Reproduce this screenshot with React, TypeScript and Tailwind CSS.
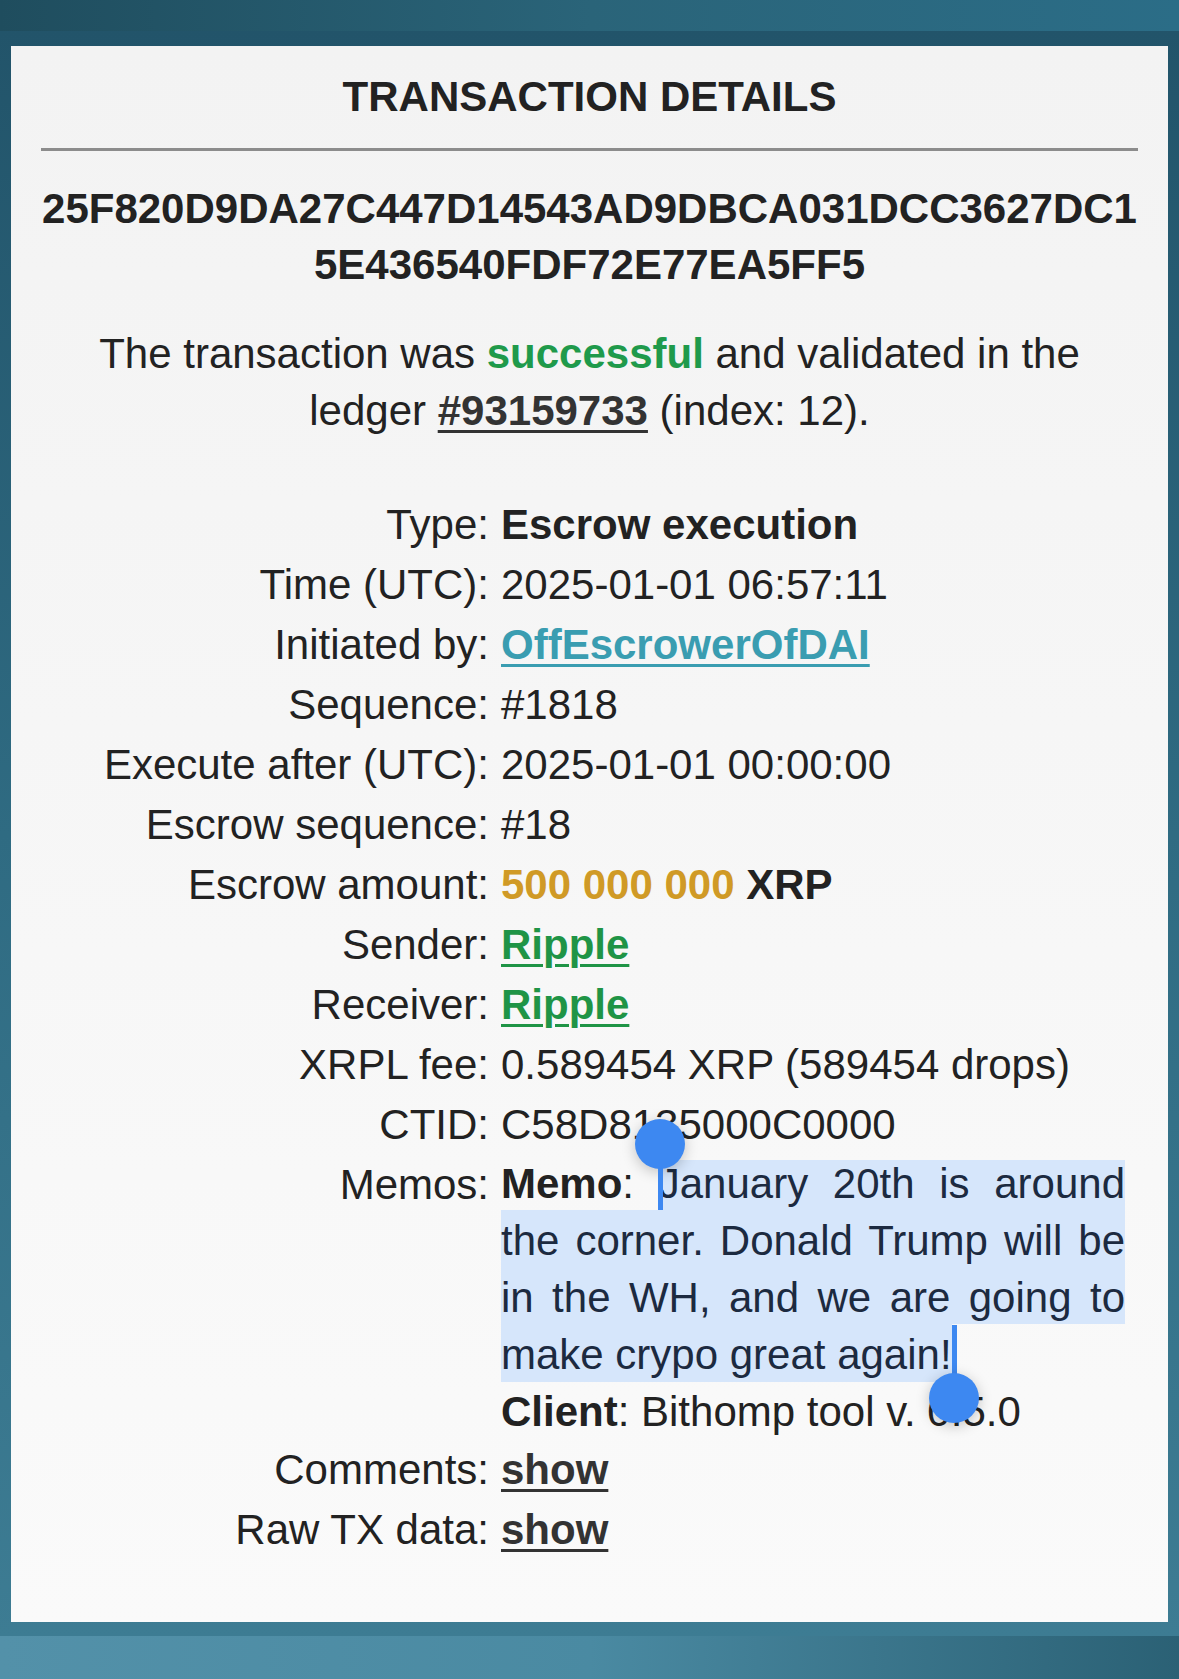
import React from 'react';

const Row: React.FC<{ label: string; children: React.ReactNode }> = ({ label, children }) => (
  <>
    <div className="text-right whitespace-nowrap">{label}</div>
    <div className="whitespace-nowrap">{children}</div>
  </>
);

const Handle: React.FC<{ className: string }> = ({ className }) => (
  <div className={`absolute w-[50px] h-[50px] rounded-full bg-[#3d88f1] shadow-[0_3px_14px_rgba(0,0,0,0.22)] z-10 ${className}`} />
);

const App: React.FC = () => {
  const sel = 'bg-[#d6e6fb] text-[#1c2a40]';

  return (
    <div className="w-[1179px] h-[1679px] flex flex-col font-['Liberation_Sans',Arial,sans-serif] text-[#222] overflow-hidden">
      <div className="h-[31px] shrink-0 bg-gradient-to-r from-[#1f4d5e] via-[#2a6479] to-[#2b6d87]" />

      <div className="flex-1 flex flex-col bg-gradient-to-b from-[#22546a] via-[#2f6b82] to-[#3d7c93] px-[11px] pt-[15px] pb-[14px]">
        <div className="flex-1 bg-gradient-to-b from-[#f3f3f3] to-[#fafafa] px-[30px] pt-[23px] text-[42px]">
          <h1 className="text-center font-bold leading-[56px]">TRANSACTION DETAILS</h1>
          <div className="mt-[23px] h-[3px] bg-[#8c8c8c]" />

          <div className="mt-[30px] text-center font-bold leading-[56px] whitespace-nowrap">
            25F820D9DA27C447D14543AD9DBCA031DCC3627DC1
            <br />
            5E436540FDF72E77EA5FF5
          </div>

          <p className="mt-[32px] text-center leading-[57px] whitespace-nowrap">
            The transaction was <span className="font-bold text-[#1f9a4b]">successful</span> and validated in the
            <br />
            ledger{' '}
            <a className="font-bold text-[#333] underline decoration-[3px] underline-offset-[5px]">#93159733</a>{' '}
            (index: 12).
          </p>

          <div className="mt-[56px] grid grid-cols-[448px_624px] gap-x-[12px] leading-[60px]">
            <Row label="Type:">
              <span className="font-bold">Escrow execution</span>
            </Row>
            <Row label="Time (UTC):">2025-01-01 06:57:11</Row>
            <Row label="Initiated by:">
              <a className="font-bold text-[#3a9db1] underline decoration-[3px] underline-offset-[5px]">OffEscrowerOfDAI</a>
            </Row>
            <Row label="Sequence:">#1818</Row>
            <Row label="Execute after (UTC):">2025-01-01 00:00:00</Row>
            <Row label="Escrow sequence:">#18</Row>
            <Row label="Escrow amount:">
              <span className="font-bold text-[#d09a26]">500 000 000</span> <span className="font-bold">XRP</span>
            </Row>
            <Row label="Sender:">
              <a className="font-bold text-[#1f9446] underline decoration-[3px] underline-offset-[5px]">Ripple</a>
            </Row>
            <Row label="Receiver:">
              <a className="font-bold text-[#1f9446] underline decoration-[3px] underline-offset-[5px]">Ripple</a>
            </Row>
            <Row label="XRPL fee:">0.589454 XRP (589454 drops)</Row>
            <Row label="CTID:">C58D8135000C0000</Row>

            <div className="text-right">Memos:</div>
            <div className="relative leading-[57px]">
              <div className="text-justify [text-align-last:justify]">
                <span className="font-bold">Memo</span>:{' '}
                <span className={`${sel} pb-[3px]`}>January 20th is around</span>
              </div>
              <div className="text-justify [text-align-last:justify]">
                <span className={`${sel} pt-[7px] pb-[3px]`}>the corner. Donald Trump will be</span>
              </div>
              <div className="text-justify [text-align-last:justify]">
                <span className={`${sel} pt-[7px] pb-[3px]`}>in the WH, and we are going to</span>
              </div>
              <div>
                <span className={`${sel} pt-[7px] pb-[4px]`}>make crypo great again!</span>
              </div>
              <div className="whitespace-nowrap">
                <span className="font-bold">Client</span>: Bithomp tool v. 0.5.0
              </div>

              <Handle className="left-[134px] top-[-36px]" />
              <div className="absolute left-[157px] top-[-11px] w-[5px] h-[66px] bg-[#3d88f1] z-10" />
              <div className="absolute left-[451px] top-[170px] w-[5px] h-[73px] bg-[#3d88f1] z-10" />
              <Handle className="left-[428px] top-[218px]" />
            </div>

            <Row label="Comments:">
              <a className="font-bold text-[#333] underline decoration-[3px] underline-offset-[5px]">show</a>
            </Row>
            <Row label="Raw TX data:">
              <a className="font-bold text-[#333] underline decoration-[3px] underline-offset-[5px]">show</a>
            </Row>
          </div>
        </div>
      </div>

      <div className="h-[43px] shrink-0 bg-gradient-to-r from-[#5391a9] via-[#4a8aa2] to-[#2b6175]" />
    </div>
  );
};

export default App;
